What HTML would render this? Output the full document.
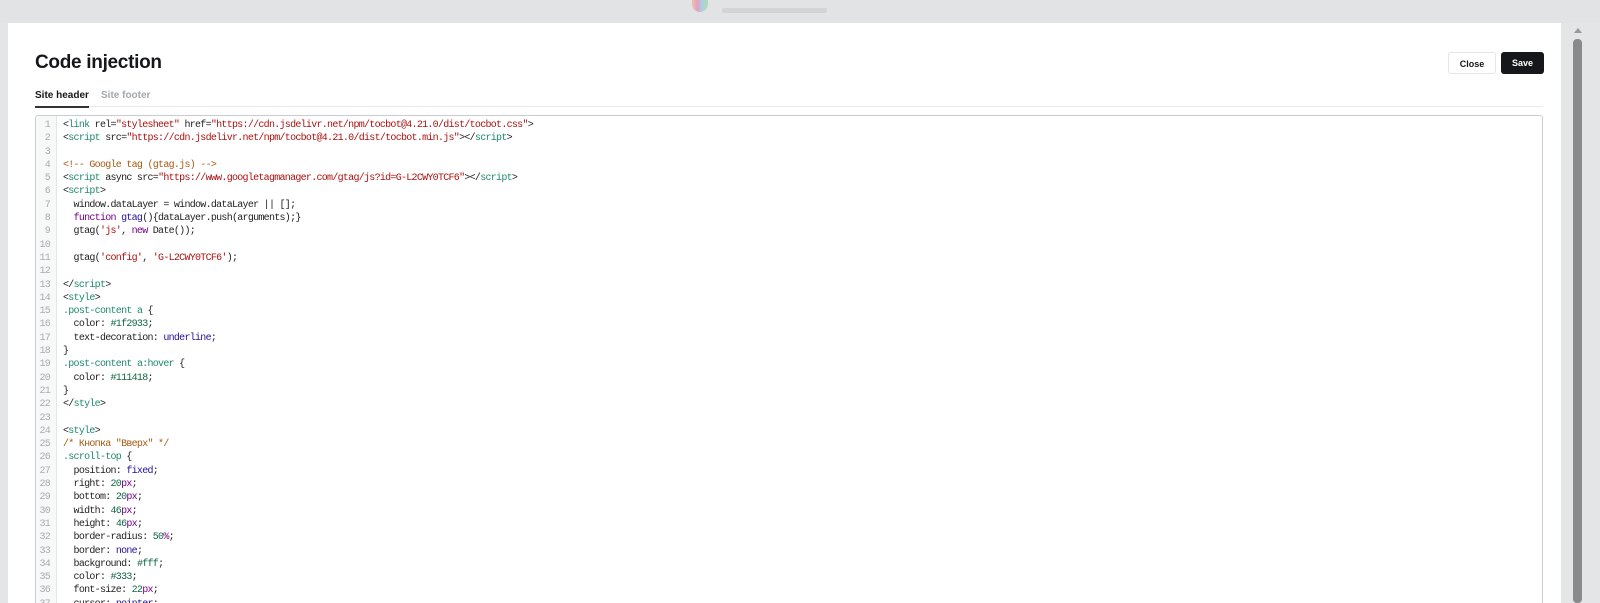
<!DOCTYPE html>
<html><head><meta charset="utf-8"><style>
*{margin:0;padding:0;box-sizing:border-box}
html,body{width:1600px;height:603px;overflow:hidden}
body{background:#e4e5e7;font-family:"Liberation Sans",sans-serif;position:relative}
.top{position:absolute;left:0;top:0;width:1600px;height:23px;background:#e2e3e5}
.logo{position:absolute;left:692px;top:0;width:16px;height:12px;border-radius:0 0 8px 8px;background:linear-gradient(90deg,#f5a35c,#e85fa0,#6cc3e8,#8fd06a);opacity:.5}
.lt{position:absolute;left:722px;top:8px;width:105px;height:5px;background:#d2d4d6;border-radius:2px}
.modal{position:absolute;left:8px;top:23px;width:1553px;height:600px;background:#fff;overflow:hidden}
h1{position:absolute;left:27px;top:29px;font-size:19px;font-weight:700;color:#15171a;letter-spacing:-0.3px}
.tabs{position:absolute;left:27px;top:67px;width:1508px;height:17px;border-bottom:1px solid #e6e8ea}
.tab{position:absolute;top:0;font-size:10px;font-weight:700}
.t1{left:0;color:#15171a;padding-bottom:5px;border-bottom:2px solid #333}
.t2{left:66px;color:#a3a8ad}
.btn{position:absolute;top:29px;height:22px;font-size:9px;font-weight:700;border-radius:3px;text-align:center;line-height:22px}
.close{left:1440px;width:48px;border:1px solid #e3e5e7;color:#15171a;background:#fff}
.save{left:1493px;width:43px;background:#15171a;color:#fff}
.ed{position:absolute;left:27px;top:92px;width:1508px;height:520px;border:1px solid #c9cdd0;border-radius:3px;overflow:hidden}
.gut{position:absolute;left:0;top:0;width:21px;height:100%;background:#f7f8f8;border-right:1px solid #e4e6e8}
pre{position:absolute;top:3px;font-family:"Liberation Mono",monospace;font-size:10px;letter-spacing:-0.72px;line-height:13.3px}
.ln{left:0;width:14px;text-align:right;color:#a8acb0}
.code{left:27px;color:#222}
.g{color:#1e8a6e}.s{color:#a11}.c{color:#a55a10}.k{color:#708}.v{color:#219}.n{color:#164}
.sb{position:absolute;left:1573px;top:39px;width:9px;height:564px;background:#8a8a8a;border-radius:4px}
.sba{position:absolute;left:1574px;top:28px;border:4px solid transparent;border-bottom:5px solid #999;border-top:0}
</style></head><body>
<div class="top"><div class="logo"></div><div class="lt"></div></div>
<div class="modal">
<h1>Code injection</h1>
<div class="tabs"><span class="tab t1">Site header</span><span class="tab t2">Site footer</span></div>
<div class="btn close">Close</div><div class="btn save">Save</div>
<div class="ed"><div class="gut"></div>
<pre class="ln">1
2
3
4
5
6
7
8
9
10
11
12
13
14
15
16
17
18
19
20
21
22
23
24
25
26
27
28
29
30
31
32
33
34
35
36
37</pre>
<pre class="code">&lt;<span class="g">link</span> rel=<span class="s">"stylesheet"</span> href=<span class="s">"https://cdn.jsdelivr.net/npm/tocbot@4.21.0/dist/tocbot.css"</span>&gt;
&lt;<span class="g">script</span> src=<span class="s">"https://cdn.jsdelivr.net/npm/tocbot@4.21.0/dist/tocbot.min.js"</span>&gt;&lt;/<span class="g">script</span>&gt;

<span class="c">&lt;!-- Google tag (gtag.js) --&gt;</span>
&lt;<span class="g">script</span> async src=<span class="s">"https://www.googletagmanager.com/gtag/js?id=G-L2CWY0TCF6"</span>&gt;&lt;/<span class="g">script</span>&gt;
&lt;<span class="g">script</span>&gt;
  window.dataLayer = window.dataLayer || [];
  <span class="k">function</span> <span class="v">gtag</span>(){dataLayer.push(arguments);}
  gtag(<span class="s">'js'</span>, <span class="k">new</span> Date());

  gtag(<span class="s">'config'</span>, <span class="s">'G-L2CWY0TCF6'</span>);

&lt;/<span class="g">script</span>&gt;
&lt;<span class="g">style</span>&gt;
<span class="g">.post-content</span> <span class="g">a</span> {
  color: <span class="n">#1f2933</span>;
  text-decoration: <span class="v">underline</span>;
}
<span class="g">.post-content</span> <span class="g">a:hover</span> {
  color: <span class="n">#111418</span>;
}
&lt;/<span class="g">style</span>&gt;

&lt;<span class="g">style</span>&gt;
<span class="c">/* Кнопка "Вверх" */</span>
<span class="g">.scroll-top</span> {
  position: <span class="v">fixed</span>;
  right: <span class="n">20</span><span class="k">px</span>;
  bottom: <span class="n">20</span><span class="k">px</span>;
  width: <span class="n">46</span><span class="k">px</span>;
  height: <span class="n">46</span><span class="k">px</span>;
  border-radius: <span class="n">50</span><span class="k">%</span>;
  border: <span class="v">none</span>;
  background: <span class="n">#fff</span>;
  color: <span class="n">#333</span>;
  font-size: <span class="n">22</span><span class="k">px</span>;
  cursor: <span class="v">pointer</span>;</pre>
</div>
</div>
<div class="sba"></div><div class="sb"></div>
</body></html>
